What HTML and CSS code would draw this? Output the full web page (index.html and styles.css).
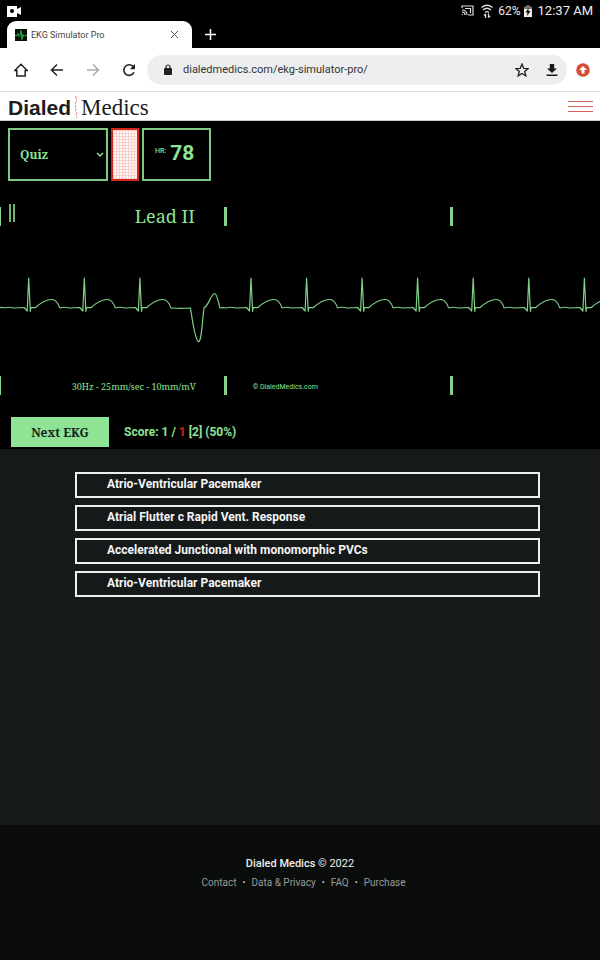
FILE: index.html
```html
<!DOCTYPE html>
<html lang="en">
  <head>
    <meta charset="UTF-8" />
    <meta name="viewport" content="width=device-width, initial-scale=1.0" />
    <title>EKG Simulator Pro</title>
    <link rel="stylesheet" href="styles.css" />
  </head>
  <body>
    <div class="status-bar">
      <svg class="camera" viewBox="0 0 15 12" width="15" height="12">
        <path fill="#fff" fill-rule="evenodd" d="M0 1h10v3l4-2v8l-4-2v4H0zM5 4a2 2 0 1 0 0 4 2 2 0 0 0 0-4z" />
      </svg>
      <svg viewBox="0 0 13 11" width="13" height="11" fill="none" stroke="#ddd">
        <path stroke-width="1.200" d="M1 3V1h11v9H7M1 5q5 0 5 5M1 7q3 0 3 3M1 9.500h1M4 3.500h5.500V8" />
      </svg>
      <svg class="wifi" viewBox="0 0 14 14" width="14" height="14" fill="none" stroke="#ddd">
        <path stroke-width="1.300" d="M1.500 3.500q5.500-4.500 11 0M3 6q4-3.500 8 0M5 8.500q2-1.600 4 0" />
        <path stroke-width="1.300" d="M5.500 14v-4M4 11.500l1.500-1.500M8.500 9.500v4M10 12l-1.500 1.500" />
      </svg>
      <span class="percent">62%</span>
      <svg class="battery" viewBox="0 0 8 12" width="8" height="12">
        <path fill="#777" d="M2.500 0h3v1.500H8V5H0V1.500h2.500z" />
        <path fill="#eee" d="M0 4h8v8H0z" />
        <path fill="#000" d="M4.500 3L1.500 7.500h2L3 11l3.500-5h-2z" />
      </svg>
      <span class="clock">12:37 AM</span>
    </div>

    <div class="tab-strip">
      <div class="tab">
        <svg viewBox="0 0 12 12" width="12" height="12">
          <path d="M0 0h12v12H0z" fill="#061208" />
          <path d="M0 6.500h2l1-2 1 3 1-1 1-5 1 9 1-5 1 2 1-1h2" fill="none" stroke="#2fae48" />
        </svg>
        <span class="tab-title">EKG Simulator Pro</span>
        <button class="icon-btn" aria-label="Close tab">
          <svg viewBox="0 0 9 9" width="9" height="9" stroke="#555"><path d="M1 1l7 7M8 1L1 8" /></svg>
        </button>
      </div>
      <button class="icon-btn new-tab" aria-label="New tab">
        <svg viewBox="0 0 11 11" width="11" height="11" stroke="#fff" stroke-width="1.500"><path d="M5.500 0v11M0 5.500h11" /></svg>
      </button>
    </div>

    <div class="toolbar">
      <button class="icon-btn" aria-label="Home">
        <svg viewBox="0 0 14 14" width="14" height="14" fill="none" stroke="#222" stroke-width="1.500">
          <path d="M.8 7.500L7 1.200l6.200 6.300H11.200v5.500H2.800V7.500z" />
        </svg>
      </button>
      <button class="icon-btn" aria-label="Back">
        <svg viewBox="0 0 14 14" width="14" height="14" fill="none" stroke="#222" stroke-width="1.500">
          <path d="M13 7H2M7 1.500L1.500 7 7 12.500" />
        </svg>
      </button>
      <button class="icon-btn" aria-label="Forward">
        <svg viewBox="0 0 14 14" width="14" height="14" fill="none" stroke="#aaa" stroke-width="1.500">
          <path d="M1 7h11M7 1.500L12.500 7 7 12.500" />
        </svg>
      </button>
      <button class="icon-btn" aria-label="Reload">
        <svg viewBox="0 0 14 14" width="14" height="14">
          <path d="M12 9.200A5.300 5.300 0 1 1 10.800 3.200L12 4.400" fill="none" stroke="#222" stroke-width="1.600" />
          <path d="M13 1v5.200H7.800z" fill="#222" />
        </svg>
      </button>
      <div class="address">
        <svg viewBox="0 0 8 11" width="8" height="11">
          <path d="M2 5V3a2 2 0 0 1 4 0v2" fill="none" stroke="#222" stroke-width="1.200" />
          <rect y="4" width="8" height="7" rx="1" fill="#222" />
        </svg>
        <input type="text" aria-label="Address" value="dialedmedics.com/ekg-simulator-pro/" />
        <button class="icon-btn" aria-label="Bookmark">
          <svg viewBox="0 0 14 14" width="14" height="14" fill="none" stroke="#222" stroke-width="1.300">
            <path d="M7 1l1.700 4.300 4.500.3-3.500 2.900 1.200 4.400L7 10.500l-3.900 2.400 1.200-4.400L.8 5.600l4.500-.3z" />
          </svg>
        </button>
        <button class="icon-btn" aria-label="Download">
          <svg viewBox="0 0 12 14" width="12" height="14" fill="#1a1a1a">
            <path d="M3.800 1h4.400v4.500h2.800L6 10 1 5.500h2.800zM.5 11.500h11V13H.5z" />
          </svg>
        </button>
      </div>
      <button class="icon-btn" aria-label="Update">
        <svg viewBox="0 0 14 14" width="14" height="14">
          <circle cx="7" cy="7" r="6.800" fill="#d54b33" />
          <path d="M7 3l4 4H8.500v3.500h-3V7H3z" fill="#fff" />
        </svg>
      </button>
    </div>

    <header class="site-header">
      <a class="logo" href="#">
        <span class="logo-bold">Dialed</span>
        <svg viewBox="0 0 4 23" width="4" height="23" fill="none" stroke="#e88" stroke-width="1">
          <path d="M2 0v3l1 2-2 2 1 2-1 2 2 2-2 1 2 3-1 2 1 3" stroke-dasharray="4 1" />
        </svg>
        <span class="logo-serif">Medics</span>
      </a>
      <button class="menu-btn" aria-label="Menu"><i></i><i></i><i></i></button>
    </header>

    <section class="monitor">
      <div class="controls">
        <select class="mode" aria-label="Mode">
          <option>Quiz</option>
          <option>Practice</option>
        </select>
        <button class="grid-btn" aria-label="Toggle grid paper"></button>
        <div class="rate"><span class="rate-label">HR:</span><span class="rate-value">78</span></div>
      </div>

      <div class="scale">
        <div class="cell lead">
          <button class="pause" aria-label="Pause"></button>
          <span>Lead II</span>
        </div>
        <div class="cell"></div>
        <div class="cell"></div>
      </div>

      <svg class="trace" viewBox="0 0 600 150">
        <defs>
          <path id="beat" d="M-24.600 82q4.600-1.500 9.600 0 6-.5 10.500-.5l3 3.500L0 52l1.600 33.500.6-4 4.400.2C13 76 18 73.500 23 73.500c4 0 6 2.500 8 8.500" />
        </defs>
        <g class="wave">
          <path d="M-1 81.500H4" />
          <use href="#beat" x="28.700" />
          <use href="#beat" x="84.300" />
          <use href="#beat" x="139.900" />
          <path d="M170.900 82q10 .6 19.600 0C192.500 95 195 114 198.500 115.700c3 0 3.500-18 5.500-33.700 5-3 7-14 10.500-14.500 2.500 0 3.500 8 5.500 14.500q4-.8 6.400 0" />
          <use href="#beat" x="251" />
          <use href="#beat" x="306.600" />
          <use href="#beat" x="362.100" />
          <use href="#beat" x="417.600" />
          <use href="#beat" x="473.200" />
          <use href="#beat" x="528.800" />
          <use href="#beat" x="584.400" />
        </g>
      </svg>

      <div class="scale">
        <div class="cell speed">30Hz - 25mm/sec - 10mm/mV</div>
        <div class="cell owner">© DialedMedics.com</div>
        <div class="cell"></div>
      </div>

      <div class="quiz-bar">
        <button class="next-btn">Next EKG</button>
        <span class="score">Score: 1 / <span class="wrong">1</span> [2] (50%)</span>
      </div>
    </section>

    <main class="answers">
      <button class="answer">Atrio-Ventricular Pacemaker</button>
      <button class="answer">Atrial Flutter c Rapid Vent. Response</button>
      <button class="answer">Accelerated Junctional with monomorphic PVCs</button>
      <button class="answer">Atrio-Ventricular Pacemaker</button>
    </main>

    <footer class="site-footer">
      <div class="copyright"><b>Dialed Medics</b> © 2022</div>
      <nav class="footer-links">
        <a href="#">Contact</a><span>·</span><a href="#">Data &amp; Privacy</a><span>·</span><a href="#">FAQ</a><span>·</span><a href="#">Purchase</a>
      </nav>
    </footer>
  </body>
</html>
```
FILE: styles.css
```css
* {
  box-sizing: border-box;
}

body {
  margin: 0;
  min-height: 100vh;
  display: flex;
  flex-direction: column;
  background: #15191a;
  font-family: Roboto, sans-serif;
  font-size: 12px;
}

svg {
  display: block;
  flex: none;
}

button {
  font-family: inherit;
  padding: 0;
  margin: 0;
  cursor: pointer;
}

.icon-btn {
  background: none;
  border: none;
  flex: none;
}

/* android status bar */
.status-bar {
  height: 21px;
  padding: 0 7px;
  display: flex;
  align-items: center;
  background: #000;
  color: #eee;
}

.status-bar .camera {
  margin-right: auto;
}

.wifi {
  margin: 0 4px 0 6px;
}

.battery {
  margin: 0 6px 0 3px;
}

.clock {
  font-size: 13px;
}

/* browser chrome */
.tab-strip {
  height: 27px;
  padding-left: 7px;
  display: flex;
  align-items: center;
  background: #000;
}

.tab {
  width: 185px;
  height: 27px;
  padding: 0 13px 0 8px;
  display: flex;
  align-items: center;
  gap: 4px;
  background: #fff;
  border-radius: 9px 9px 0 0;
}

.tab-title {
  flex: 1;
  font-size: 9px;
  color: #444;
}

.new-tab {
  margin-left: 13px;
}

.toolbar {
  height: 44px;
  padding: 0 10px 0 14px;
  display: flex;
  align-items: center;
  gap: 22px;
  background: #fff;
  border-bottom: 1px solid #ddd;
}

.address {
  flex: 1;
  height: 30px;
  margin: 0 -13px 0 -11px;
  padding: 0 9px 0 17px;
  display: flex;
  align-items: center;
  gap: 17px;
  background: #edeef0;
  border-radius: 15px;
}

.address input {
  flex: 1;
  min-width: 0;
  margin-left: -6px;
  padding: 0;
  border: none;
  background: none;
  font: 11px Roboto, sans-serif;
  color: #333;
}

/* site header */
.site-header {
  height: 29px;
  padding: 0 7px 0 8px;
  display: flex;
  align-items: center;
  justify-content: space-between;
  background: #fff;
  border-bottom: 1px solid #ccc;
}

.logo {
  padding-top: 3px;
  display: flex;
  align-items: center;
  gap: 3px;
  color: #1c1c1c;
  text-decoration: none;
  line-height: 28px;
}

.logo-bold {
  font-family: "Liberation Sans", Arial, sans-serif;
  font-size: 21px;
  font-weight: bold;
}

.logo-serif {
  font-family: "Liberation Serif", serif;
  font-size: 23px;
}

.menu-btn {
  width: 25px;
  display: flex;
  flex-direction: column;
  gap: 4px;
  background: none;
  border: none;
}

.menu-btn i {
  width: 100%;
  height: 1px;
  background: #d0665c;
}

/* monitor */
.monitor {
  background: #000;
  color: #8fe394;
}

.controls {
  padding: 7px 8px 0;
  display: flex;
  gap: 3px;
}

.mode {
  width: 100px;
  height: 53px;
  padding: 0 0 0 10px;
  appearance: none;
  border: 2px solid #7fc985;
  border-radius: 0;
  color: #8fe394;
  font: bold 12px "Noto Serif", "Droid Serif", "DejaVu Serif", serif;
  background: #000 url('data:image/svg+xml,<svg xmlns="http://www.w3.org/2000/svg" width="8" height="6" fill="none" stroke="%238fe394" stroke-width="1.500"><path d="M1 1l3 3 3-3"/></svg>') no-repeat right 2px center;
}

.grid-btn {
  width: 28px;
  height: 53px;
  border: 2px solid #d5261a;
  background:
    repeating-linear-gradient(to right, #fbd0ca 0 1px, transparent 1px 3px),
    repeating-linear-gradient(to bottom, #fbd0ca 0 1px, transparent 1px 3px),
    #fff8f6;
}

.rate {
  width: 69px;
  height: 53px;
  padding: 0 0 3px 11px;
  display: flex;
  align-items: center;
  gap: 4px;
  border: 2px solid #7fc985;
}

.rate-label {
  font-size: 7px;
  font-weight: 500;
  margin-bottom: 5px;
}

.rate-value {
  font-size: 21px;
  font-weight: bold;
}

.scale {
  display: grid;
  grid-template-columns: 3fr 3fr 2fr;
  margin-left: -2px;
}

.cell {
  height: 19px;
  border-left: 3px solid #86d08b;
  display: flex;
  align-items: center;
}

.controls + .scale {
  margin-top: 26px;
}

.lead {
  justify-content: space-between;
  padding: 0 29px 2px 8px;
  font: 18px "Noto Serif", "Droid Serif", "DejaVu Serif", serif;
}

.pause {
  width: 6px;
  height: 18px;
  margin-bottom: 6px;
  background: none;
  border: solid #6fb375;
  border-width: 0 2px;
}

.trace {
  width: 100%;
}

.wave {
  fill: none;
  stroke: #7fd087;
  stroke-width: 1.2;
  stroke-linejoin: round;
}

.speed {
  justify-content: flex-end;
  padding: 2px 28px 0 0;
  font: 9px "Noto Serif", "Droid Serif", "DejaVu Serif", serif;
}

.owner {
  padding: 3px 0 0 26px;
  font-size: 7px;
}

.quiz-bar {
  padding: 22px 11px 2px;
  display: flex;
  align-items: center;
  gap: 15px;
}

.next-btn {
  width: 98px;
  height: 30px;
  background: #8fe394;
  border: none;
  color: #14241a;
  font: bold 12px "Noto Serif", "Droid Serif", "DejaVu Serif", serif;
}

.score {
  font-weight: bold;
}

.wrong {
  color: #d8231c;
}

/* answers */
.answers {
  flex: 1;
  padding: 23px 10% 23px 12.5%;
  display: flex;
  flex-direction: column;
  gap: 7px;
}

.answer {
  height: 26px;
  padding: 0 30px 2px;
  background: none;
  border: 2px solid #eee;
  color: #f4f4f4;
  font-size: 12px;
  font-weight: bold;
  text-align: left;
}

/* footer */
.site-footer {
  height: 135px;
  padding-top: 31px;
  background: #0b0d0d;
  text-align: center;
  color: #eee;
  font-size: 11px;
  line-height: 16px;
}

.copyright b {
  font-weight: 500;
}

.footer-links {
  margin-top: 3px;
  padding-left: 7px;
  display: flex;
  justify-content: center;
  gap: 6px;
  font-size: 10px;
}

.footer-links span {
  font-weight: bold;
}

.footer-links a {
  color: #999;
  text-decoration: none;
}
```
